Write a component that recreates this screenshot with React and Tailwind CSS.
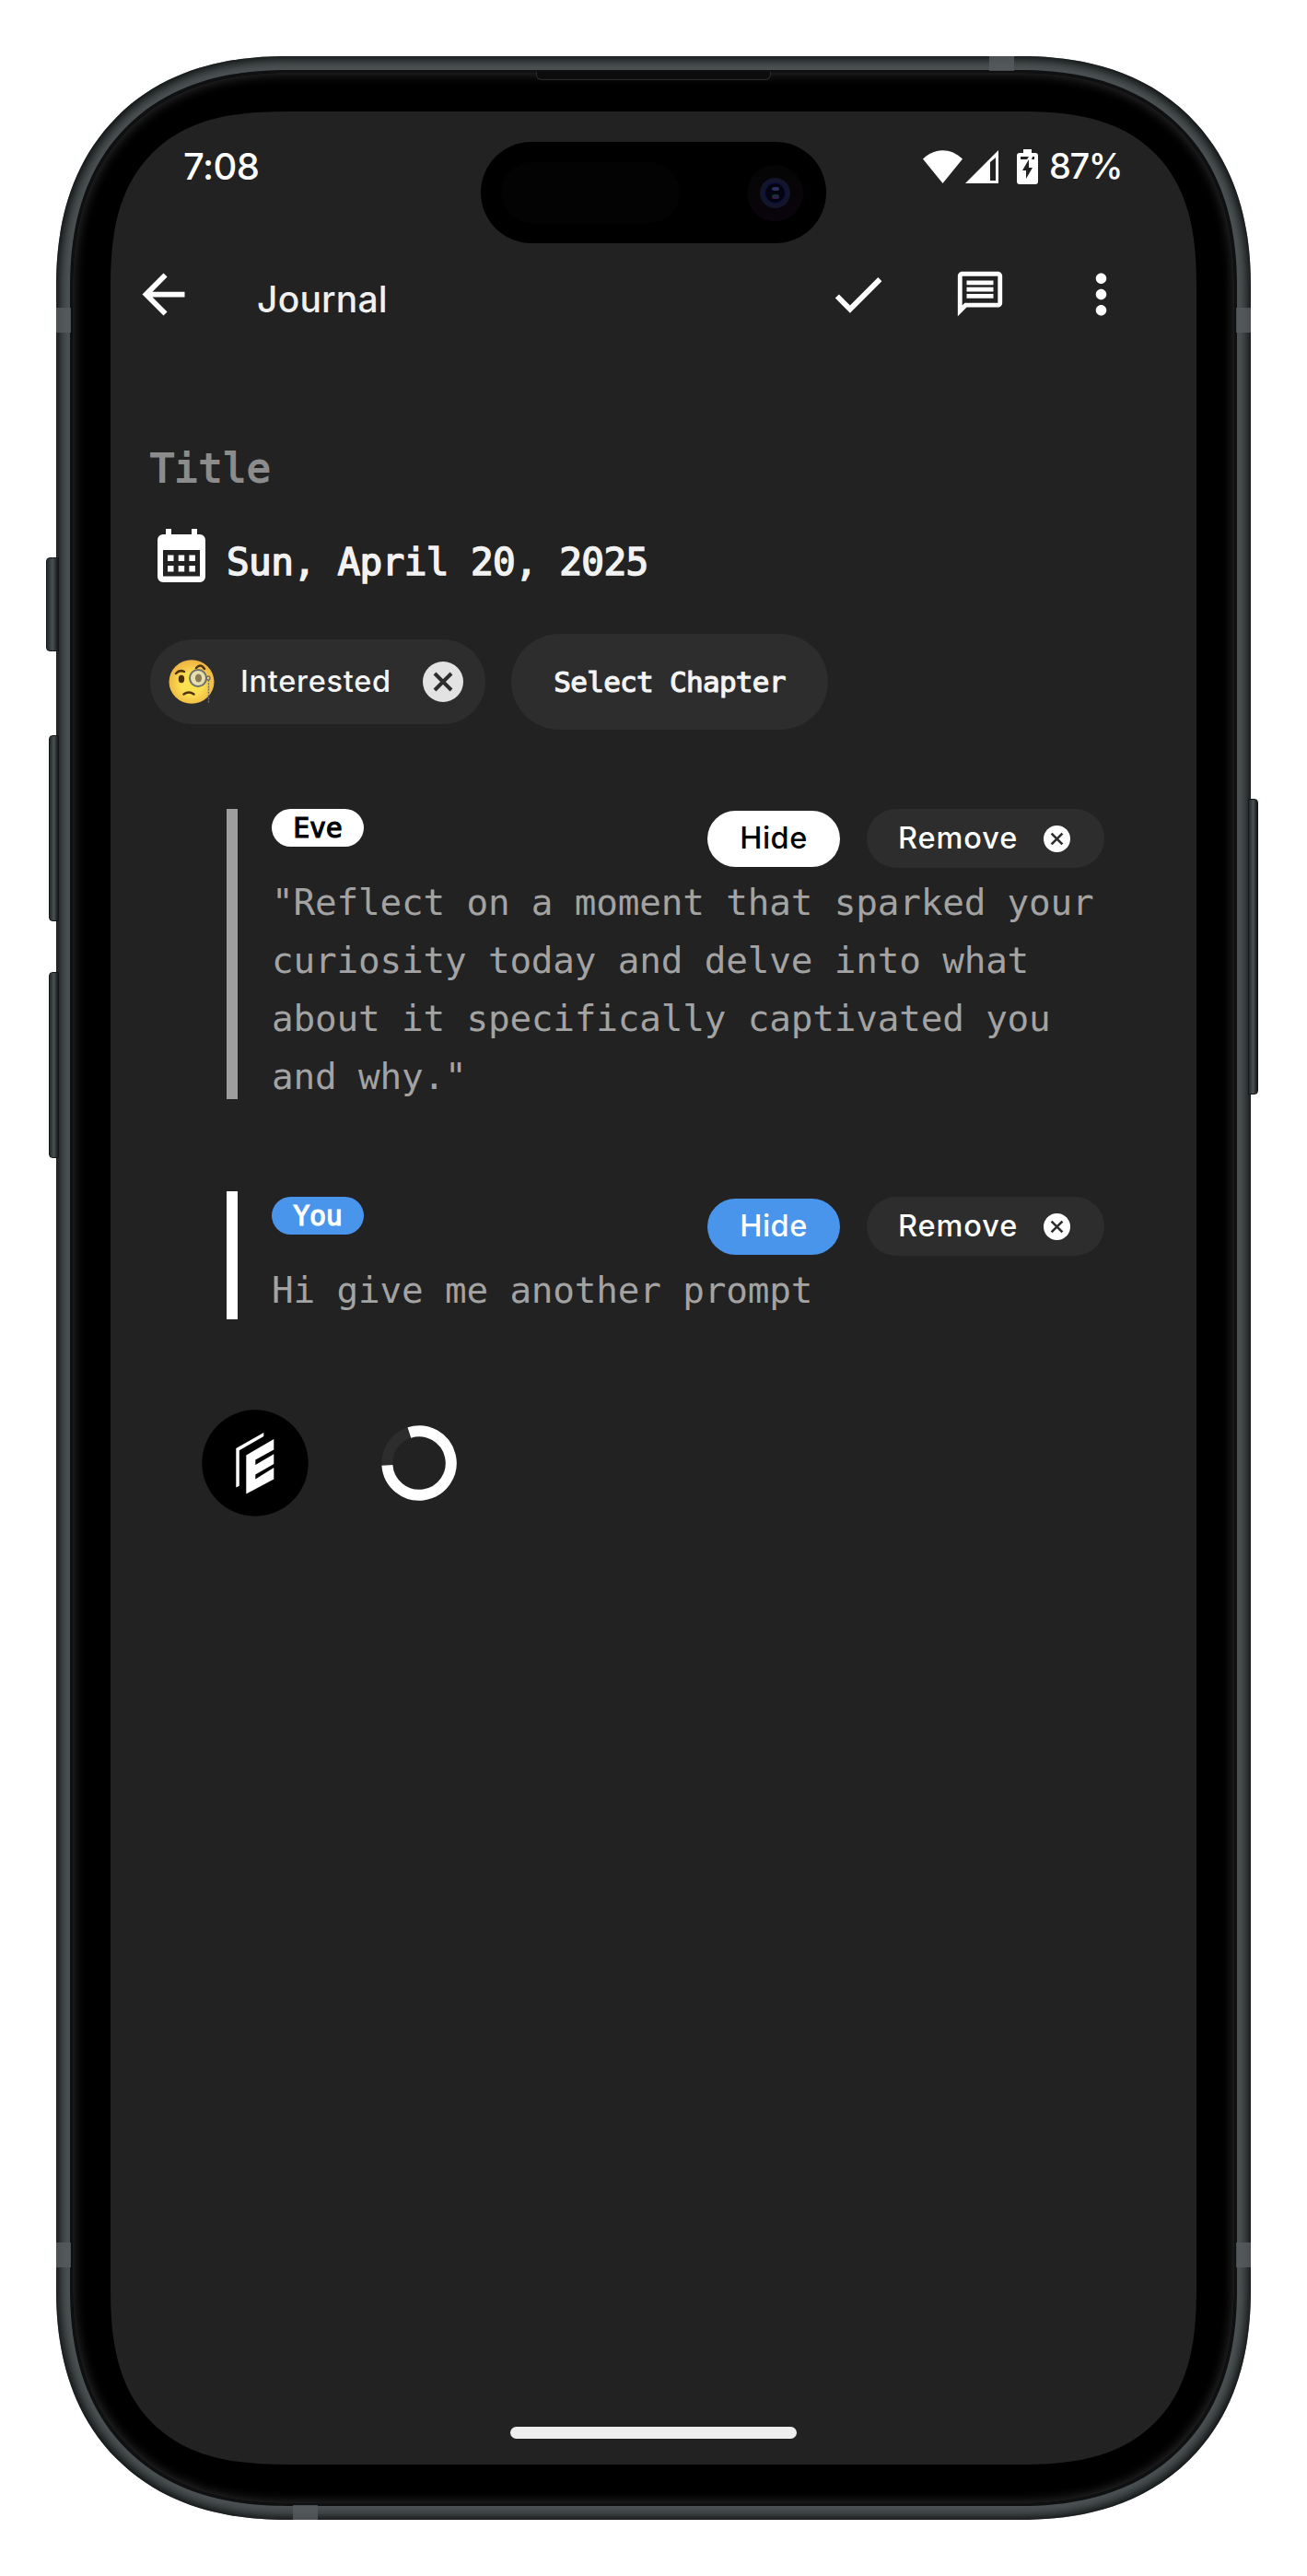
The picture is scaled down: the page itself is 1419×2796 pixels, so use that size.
import React from "react";
import { MdArrowBack, MdCheck, MdOutlineMessage, MdMoreVert } from "react-icons/md";

const mono = "font-['DejaVu_Sans_Mono',monospace]";
const sans = "font-['Inter',sans-serif]";

function CloseBadge({ size, fill, stroke = "#2d2d2d", className = "" }) {
  return (
    <svg width={size} height={size} viewBox="0 0 44 44" className={"shrink-0 " + className}>
      <circle cx="22" cy="22" r="22" fill={fill} />
      <path d="M13 13 31 31M31 13 13 31" stroke={stroke} strokeWidth="4" />
    </svg>
  );
}

function CalendarIcon() {
  return (
    <svg width="52" height="58" viewBox="0 0 52 58" fill="#fff" className="shrink-0">
      <path
        fillRule="evenodd"
        d="M9 0h6v6h22V0h6v6h3a6 6 0 0 1 6 6v40a6 6 0 0 1-6 6H6a6 6 0 0 1-6-6V12a6 6 0 0 1 6-6h3zM6 23v28.500h40V23z"
      />
      <path d="M11 28.500h6.500v6.500h-6.500zM22.700 28.500h6.500v6.500h-6.500zM34.400 28.500h6.500v6.500h-6.500zM11 40h6.500v6.500h-6.500zM22.700 40h6.500v6.500h-6.500zM34.400 40h6.500v6.500h-6.500z" />
    </svg>
  );
}

function MonocleFace() {
  return (
    <svg width="50" height="48" viewBox="0 0 50 48" className="shrink-0">
      <defs>
        <radialGradient id="face" cx=".5" cy=".55" r=".52">
          <stop offset=".45" stopColor="#fbe052" />
          <stop offset="1" stopColor="#efb544" />
        </radialGradient>
      </defs>
      <ellipse cx="25" cy="24" rx="24.500" ry="23.800" fill="url(#face)" />
      <path d="M8 15q4-4.500 9-2" fill="none" stroke="#52330f" strokeWidth="2.500" strokeLinecap="round" />
      <path d="M30 9q5-5.500 9 1" fill="none" stroke="#52330f" strokeWidth="2.500" strokeLinecap="round" />
      <ellipse cx="14" cy="21" rx="3.200" ry="4.200" fill="#4a2d0c" />
      <circle cx="32" cy="20" r="9" fill="#e5dfae" stroke="#6c6f6c" strokeWidth="2" />
      <ellipse cx="32.500" cy="20" rx="3.600" ry="4.600" fill="#8a7d55" />
      <circle cx="43" cy="20" r="2" fill="none" stroke="#6c6f6c" strokeWidth="1.300" />
      <path d="M43.500 22v25" stroke="#6c6f6c" strokeWidth="1.500" strokeDasharray="2 1.200" />
      <path d="M16.500 37.500q5.500-4 11 0" fill="none" stroke="#52330f" strokeWidth="2.500" strokeLinecap="round" />
    </svg>
  );
}

function StatusBar() {
  return (
    <div className={"flex h-[119px] items-center pl-[79px] pr-[82px] text-white " + sans}>
      <span className="text-[40px] font-medium tracking-[-0.6px]">7:08</span>
      <div className="ml-auto flex items-center">
        <svg width="43" height="36" viewBox="0 0 43 36" fill="#fff">
          <path d="M21.500 36 0 9.500C13-3 30-3 43 9.500z" />
        </svg>
        <svg width="36" height="36" viewBox="0 0 36 36" className="ml-[3px]">
          <path fill="#fff" fillRule="evenodd" d="M36 0v36H0zM27 13v20h6V8z" />
        </svg>
        <svg width="23" height="38" viewBox="0 0 23 38" className="ml-[20px]">
          <path
            fill="#fff"
            fillRule="evenodd"
            d="M7 0h9v4h4a3 3 0 0 1 3 3v28a3 3 0 0 1-3 3H3a3 3 0 0 1-3-3V7a3 3 0 0 1 3-3h4zM4 8v3h7l2-3zM17 8l-1 3h3V8zM13 11 6 23h4v9l7-12h-4z"
          />
        </svg>
        <span className="ml-[12px] w-[78px] whitespace-nowrap text-[38px] font-medium tracking-[-1.500px]">87%</span>
      </div>
    </div>
  );
}

function AppBar() {
  return (
    <div className="flex h-[158px] items-center pl-[23px] pr-[69px] text-white">
      <MdArrowBack size={69} />
      <h1 className={"ml-[67px] pt-[12px] text-[39px] font-medium tracking-[0.200px] text-[#f0f0f0] " + sans}>Journal</h1>
      <div className="ml-auto flex items-center">
        <MdCheck size={69} />
        <MdOutlineMessage size={58} className="ml-[69px]" />
        <MdMoreVert size={69} className="ml-[68px]" />
      </div>
    </div>
  );
}

function Message({ name, pill, hide, bar, body, outer, inner }) {
  return (
    <section className={"ml-[126px] flex " + outer}>
      <div className={"w-3 shrink-0 " + bar} />
      <div className={"ml-[37px] w-[904px] " + inner}>
        <div className="flex h-[70px] items-start">
          <span
            className={
              "flex h-[41px] w-[100px] items-center justify-center rounded-full text-[30px] leading-none tracking-[-0.300px] [-webkit-text-stroke:1.2px_currentColor] " +
              mono + " " + pill
            }
          >
            {name}
          </span>
          <div className={"ml-auto flex items-center text-[32.500px] font-medium leading-none " + sans}>
            <button className={"h-[61px] w-[144px] rounded-full tracking-[0.500px] " + hide}>Hide</button>
            <button className="ml-[29px] flex h-[64px] w-[258px] items-center rounded-full bg-[#2d2d2d] pl-[34px] text-white">
              <span className="w-[132px] whitespace-nowrap text-left tracking-[0.900px]">Remove</span>
              <CloseBadge size={29} fill="#fff" className="ml-[26px]" />
            </button>
          </div>
        </div>
        <p className={"whitespace-pre text-[39.300px] leading-[63px] tracking-[-0.170px] text-[#a3a3a3] " + mono}>{body}</p>
      </div>
    </section>
  );
}

function Screen() {
  return (
    <main className="flex h-[2554px] w-[1179px] flex-col overflow-hidden rounded-[192px] bg-[#222222] [corner-shape:superellipse(1.365)]">
      <StatusBar />
      <AppBar />
      <div className={"mt-[71px] flex h-20 items-center pl-[43px] text-[43.500px] text-[#8c8c8c] [-webkit-text-stroke:1.800px_currentColor] " + mono}>
        Title
      </div>
      <div className="mt-[14px] flex h-20 items-center pl-[51px]">
        <CalendarIcon />
        <span className={"ml-[23px] pt-[15px] text-[41px] tracking-[-0.600px] text-[#f2f2f2] [-webkit-text-stroke:1.500px_currentColor] " + mono}>
          Sun, April 20, 2025
        </span>
      </div>
      <div className="mt-[45px] flex h-[104px] items-center pl-[43px]">
        <div className="flex h-[92px] w-[364px] items-center rounded-full bg-[#2d2d2d] pl-[20px]">
          <MonocleFace />
          <span className={"ml-[28px] w-[170px] whitespace-nowrap text-[32.500px] font-medium tracking-[0.700px] text-[#f5f5f5] " + sans}>Interested</span>
          <CloseBadge size={44} fill="#e3e3e3" className="ml-[28px]" />
        </div>
        <button
          className={
            "ml-[28px] h-[104px] w-[344px] rounded-full bg-[#2d2d2d] text-[31px] tracking-[-0.700px] text-[#f5f5f5] [-webkit-text-stroke:1.200px_currentColor] " +
            mono
          }
        >
          Select Chapter
        </button>
      </div>
      <Message
        name="Eve"
        pill="bg-white text-black"
        hide="bg-white text-black"
        bar="bg-[#9e9e9e]"
        outer="mt-[86px] h-[315px]"
        inner=""
        body={'"Reflect on a moment that sparked your\ncuriosity today and delve into what\nabout it specifically captivated you\nand why."'}
      />
      <Message
        name="You"
        pill="bg-[#4a95ec] text-white"
        hide="bg-[#4a95ec] text-white"
        bar="bg-white"
        outer="mt-[100px] h-[139px]"
        inner="pt-[6px]"
        body="Hi give me another prompt"
      />
      <div className="mt-[98px] flex items-center pl-[99px]">
        <svg width="116" height="116" viewBox="0 0 116 116">
          <circle cx="58" cy="58" r="57.700" fill="#000" />
          <path
            fill="#fff"
            d="M37.300 42 67.300 25v4L40.800 44.300v38.500l-3.500 1.700zM48.300 49.500 78.300 32v11.500L58.300 54.500v5.500L78.300 48.300V59L58.300 70.500v5L78.300 63v12.500L48.300 91.500z"
          />
        </svg>
        <svg width="82" height="82" viewBox="0 0 82 82" className="ml-[79px]">
          <circle cx="41" cy="41" r="34.700" fill="none" stroke="#2d2d2d" strokeWidth="12" />
          <path d="M30.400 8A34.700 34.700 0 1 1 6.400 43.400" fill="none" stroke="#fff" strokeWidth="12" />
        </svg>
      </div>
      <div className="mb-[28px] ml-[434px] mt-auto h-[13px] w-[311px] rounded-full bg-[#eeeeee]" />
    </main>
  );
}

function Island() {
  return (
    <div className="absolute left-[461px] top-[93px] flex h-[110px] w-[375px] items-center rounded-full bg-black pl-[22px]">
      <div className="h-[66px] w-[194px] rounded-full bg-[#030303]" />
      <div className="ml-[73px] flex size-[61px] items-center justify-center rounded-full bg-gradient-to-b from-[#050505] to-[#0a040c]">
        <div className="flex size-[33px] items-center justify-center rounded-full bg-[#13152a]">
          <div className="flex size-[23px] flex-col items-center justify-between rounded-full border border-[#0b1050] bg-[#03040f] py-[4px]">
            <div className="h-[4px] w-[8px] rounded-full bg-[#27305f]" />
            <div className="h-[5px] w-[8px] rounded-full bg-gradient-to-b from-[#0a343a] to-[#341448]" />
          </div>
        </div>
      </div>
    </div>
  );
}

const sideKey = "absolute border border-[#15181a] bg-gradient-to-r from-[#24292a] via-[#4b5153] to-[#15181a]";
const band = "absolute bg-[#565c5e]/80";

export default function App() {
  return (
    <div className="h-[2796px] w-[1419px] bg-white pl-[61px] pt-[61px]">
      <div className="relative h-[2674px] w-[1297px]">
        <div className={sideKey + " left-[-11px] top-[544px] h-[102px] w-[14px] rounded-l-[4px]"} />
        <div className={sideKey + " left-[-8px] top-[737px] h-[202px] w-[11px] rounded-l-[4px]"} />
        <div className={sideKey + " left-[-8px] top-[994px] h-[202px] w-[11px] rounded-l-[4px]"} />
        <div className={sideKey + " left-[1294px] top-[806px] h-[321px] w-[11px] rounded-r-[4px]"} />
        <div className="h-[2674px] w-[1297px] rounded-[250px] bg-[#4d5354] p-[15px] shadow-[inset_0_0_11px_4px_#0d1011] [corner-shape:superellipse(1.18)]">
          <div className="h-[2644px] w-[1267px] rounded-[236px] border-[3px] border-[#0e1011] bg-black shadow-[inset_0_0_12px_2px_#2a2a2a] [corner-shape:superellipse(1.2)]">
            <div className="pl-[41px] pt-[42px]">
              <Screen />
            </div>
          </div>
        </div>
        <div className={band + " left-0 top-[273px] h-[27px] w-[16px]"} />
        <div className={band + " right-0 top-[273px] h-[27px] w-[16px]"} />
        <div className={band + " left-0 top-[2373px] h-[27px] w-[16px]"} />
        <div className={band + " right-0 top-[2373px] h-[27px] w-[16px]"} />
        <div className={band + " left-[1013px] top-0 h-[16px] w-[27px]"} />
        <div className={band + " bottom-0 left-[257px] h-[16px] w-[27px]"} />
        <div className="absolute left-[521px] top-[17px] h-[9px] w-[255px] rounded-b-[6px] border border-t-0 border-[#2c2c2c] bg-[#0c0c0c]" />
        <Island />
      </div>
    </div>
  );
}
